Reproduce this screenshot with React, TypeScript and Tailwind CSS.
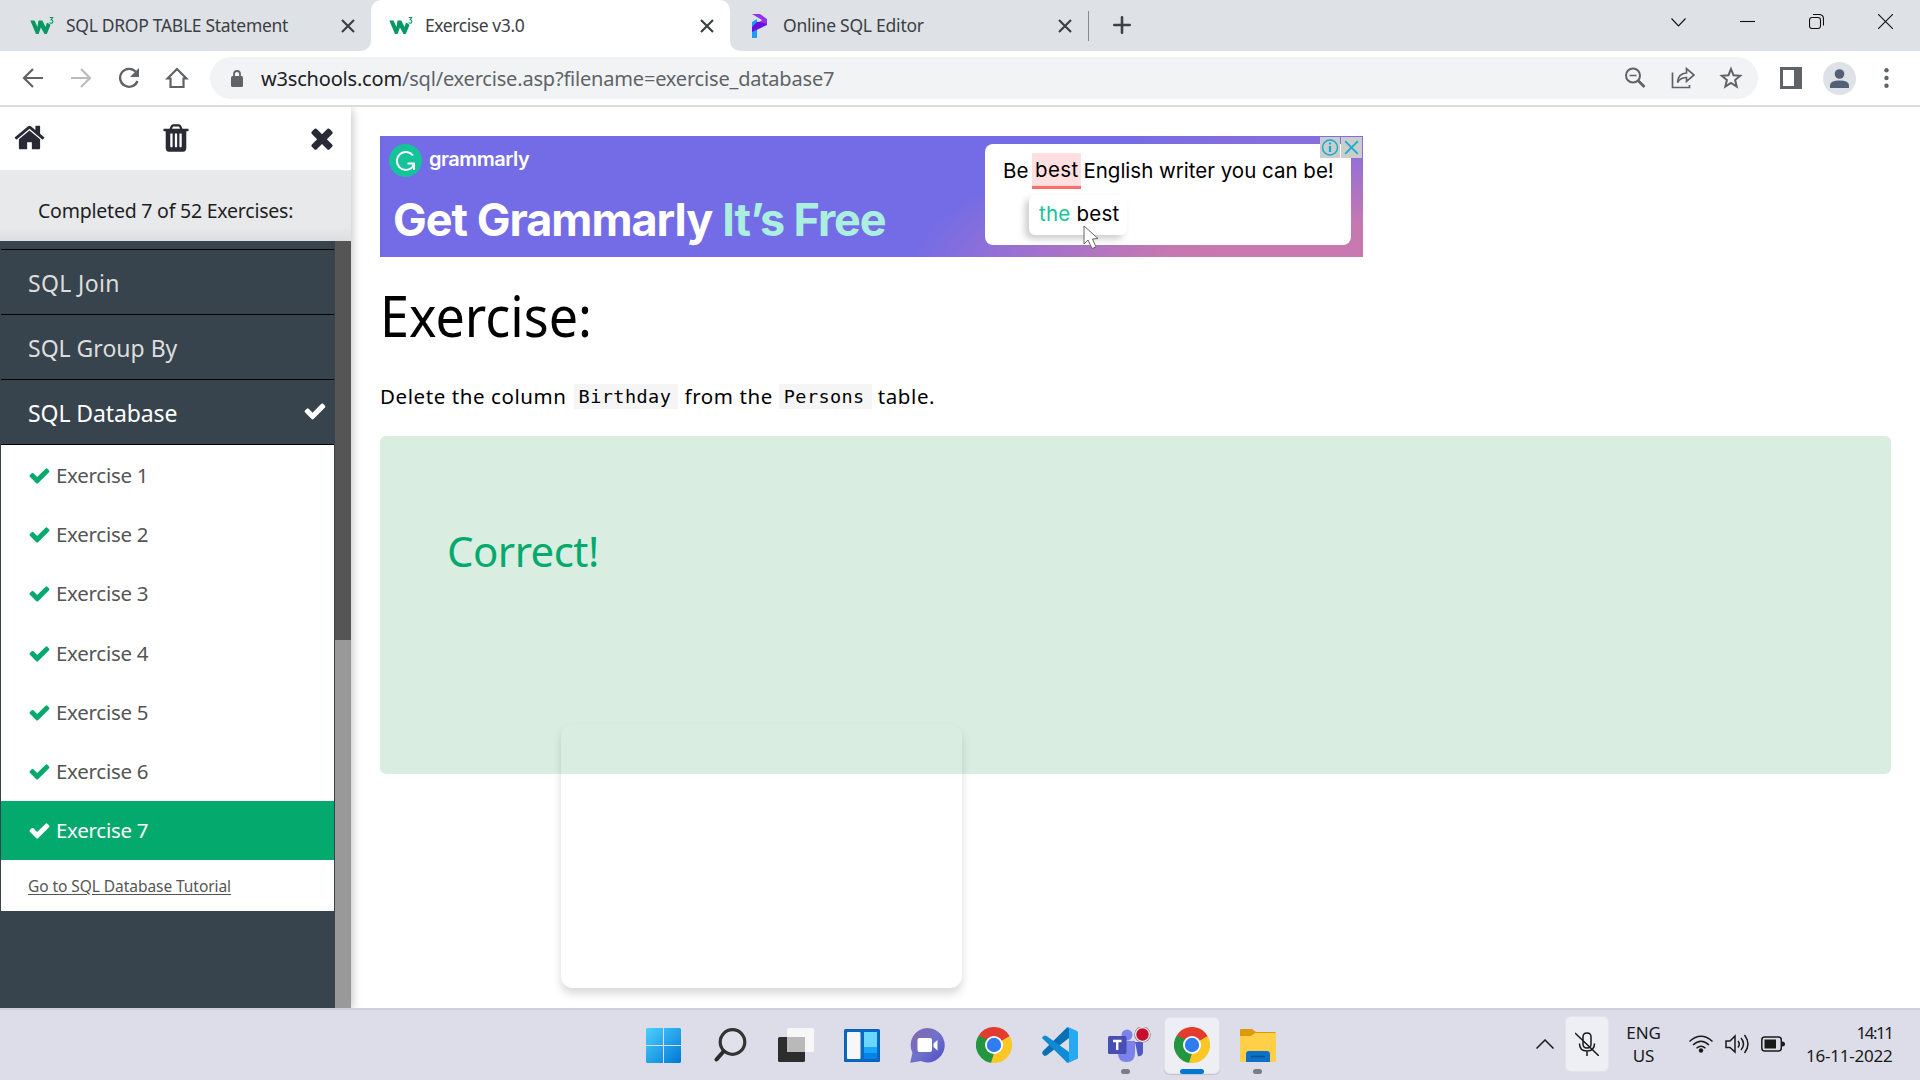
import React from "react";

const CHECK =
  "M1671 566q0 40-28 68l-724 724-136 136q-28 28-68 28t-68-28l-136-136-362-362q-28-28-28-68t28-68l136-136q28-28 68-28t68 28l294 295 656-657q28-28 68-28t68 28l136 136q28 28 28 68z";
const TIMES =
  "M1490 1322q0 40-28 68l-136 136q-28 28-68 28t-68-28l-294-294-294 294q-28 28-68 28t-68-28l-136-136q-28-28-28-68t28-68l294-294-294-294q-28-28-28-68t28-68l136-136q28-28 68-28t68 28l294 294 294-294q28-28 68-28t68 28l136 136q28 28 28 68t-28 68l-294 294 294 294q28 28 28 68z";
const HOME =
  "M1472 992v480q0 26-19 45t-45 19h-384v-384h-256v384h-384q-26 0-45-19t-19-45v-480q0-1 .5-3t.5-3l575-474 575 474q1 2 1 6zm223-69l-62 74q-8 9-21 11h-3q-13 0-21-7l-692-577-692 577q-12 8-24 7-13-2-21-11l-62-74q-8-10-7-23.5t11-21.5l719-599q32-26 76-26t76 26l244 204v-195q0-14 9-23t23-9h192q14 0 23 9t9 23v408l219 182q10 8 11 21.5t-7 23.5z";
const TRASH =
  "M704 1376v-704q0-14-9-23t-23-9h-64q-14 0-23 9t-9 23v704q0 14 9 23t23 9h64q14 0 23-9t9-23zm256 0v-704q0-14-9-23t-23-9h-64q-14 0-23 9t-9 23v704q0 14 9 23t23 9h64q14 0 23-9t9-23zm256 0v-704q0-14-9-23t-23-9h-64q-14 0-23 9t-9 23v704q0 14 9 23t23 9h64q14 0 23-9t9-23zm-544-992h448l-48-117q-7-9-17-11h-317q-10 2-17 11zm928 32v64q0 14-9 23t-23 9h-96v948q0 83-47 143.5t-113 60.5h-832q-66 0-113-58.5t-47-141.5v-952h-96q-14 0-23-9t-9-23v-64q0-14 9-23t23-9h309l70-167q15-37 54-63t79-26h320q40 0 79 26t54 63l70 167h309q14 0 23 9t9 23z";

function Glyph({ d, className }: { d: string; className: string }) {
  return (
    <svg viewBox="0 0 1792 1792" className={className} fill="currentColor">
      <path d={d} />
    </svg>
  );
}

function W3Icon() {
  return (
    <svg viewBox="0 0 24 20" className="h-5 w-6 shrink-0">
      <path d="M.3 4.500h4.200l3 6.500 1-6.500h3.800l3.300 6.500 1.300-4.300q2.300.3 3.600 2.300l-3.700 9h-2.300l-3.600-6.500-2.300 6.500H6z" fill="#059862" />
      <path d="M19.700 1.500h3l-1.600 2.300q1.800 0 1.800 1.700T21.200 7.200q-1.100 0-1.600-.7" fill="none" stroke="#059862" strokeWidth="1.100" />
    </svg>
  );
}

function TabClose() {
  return (
    <svg viewBox="0 0 14 14" className="size-[14px] shrink-0" stroke="#3c4043" strokeWidth="2.200">
      <path d="M1 1l12 12M13 1L1 13" />
    </svg>
  );
}

const WINDOW_BUTTONS = [
  "M.5 4.500L7.500 12l7-7.500",
  "M0 7.500h15",
  "M3 3.500h6q2.500 0 2.500 2.500v6q0 2.500-2.500 2.500H3Q.5 14.500.5 12V6q0-2.500 2.500-2.500M4 .5h6q4.500 0 4.500 4.500v6.500",
  "M0 0l15 15M15 0L0 15",
];

function TabStrip() {
  return (
    <div className="flex h-[51px] shrink-0 bg-[#dee1e6] text-[17.5px] text-[#3c4043]">
      <div className="relative z-10 flex w-[371px] items-center rounded-br-[10px] bg-[#dee1e6] pr-4 pl-[30px]">
        <W3Icon />
        <span className="ml-3 tracking-[-0.3px] whitespace-nowrap">SQL DROP TABLE Statement</span>
        <span className="flex-1" />
        <TabClose />
      </div>
      <div className="-mx-[10px] flex w-[379px] bg-[linear-gradient(#dee1e6_50%,#fff_50%)] px-[10px]">
        <div className="flex w-[359px] items-center rounded-t-[10px] bg-white pr-4 pl-[18px]">
          <W3Icon />
          <span className="ml-3 tracking-[-0.42px] whitespace-nowrap">Exercise v3.0</span>
          <span className="flex-1" />
          <TabClose />
        </div>
      </div>
      <div className="relative z-10 flex w-[358px] items-center rounded-bl-[10px] bg-[#dee1e6] pr-4 pl-[22px]">
        <svg viewBox="0 0 15 24" className="h-6 w-[15px] shrink-0">
          <path d="M0 8l5-3v19H0z" fill="#1b9dff" />
          <path d="M15 7v4L0 18v-5l5-5z" fill="#6a11e0" />
          <path d="M0 0h8l7 5v5L8 8l2-2z" fill="#9333ea" />
        </svg>
        <span className="ml-4 tracking-[-0.24px] whitespace-nowrap">Online SQL Editor</span>
        <span className="flex-1" />
        <TabClose />
      </div>
      <div className="mt-[11px] h-[30px] w-px bg-[#85888d]" />
      <svg viewBox="0 0 18 18" className="mt-4 ml-6 size-[18px]" stroke="#3c4043" strokeWidth="2.600" strokeLinecap="round">
        <path d="M9 1.300v15.400M1.300 9h15.400" />
      </svg>
      <span className="flex-1" />
      <div className="flex h-[43px] [&>span]:flex [&>span]:w-[69px] [&>span]:items-center [&>span]:justify-center">
        {WINDOW_BUTTONS.map((d) => (
          <span key={d}>
            <svg viewBox="0 0 15 15" className="size-[15px]" fill="none" stroke="#111" strokeWidth="1.100">
              <path d={d} />
            </svg>
          </span>
        ))}
      </div>
    </div>
  );
}

function Toolbar() {
  return (
    <div className="flex h-[56px] shrink-0 items-center border-b-2 border-[#dcdcdc] bg-white text-[#5f6368]">
      <div className="flex w-[210px] pl-[9px] [&>svg]:mx-3 [&>svg]:size-6">
        <svg viewBox="0 0 24 24" fill="none" stroke="currentColor" strokeWidth="2.200"><path d="M22 12H3M12 3l-9 9 9 9" /></svg>
        <svg viewBox="0 0 24 24" fill="none" stroke="#babcbe" strokeWidth="2.200"><path d="M2 12h19M12 3l9 9-9 9" /></svg>
        <svg viewBox="0 0 24 24" fill="none" stroke="currentColor" strokeWidth="2.300"><path d="M20.500 15a9 9 0 1 1-1.700-9.200" /><path d="M22 2v9h-9z" fill="currentColor" stroke="none" /></svg>
        <svg viewBox="0 0 24 24" fill="none" stroke="currentColor" strokeWidth="2.200"><path d="M2.500 12.500L12 3l9.500 9.500h-3V21h-13v-8.500z" /></svg>
      </div>
      <div className="flex h-[42px] w-[1548px] items-center rounded-full bg-[#f1f3f4] pr-[15px] pl-[21px]">
        <svg viewBox="0 0 12 17" className="h-[17px] w-3" fill="none" stroke="currentColor" strokeWidth="1.800">
          <path d="M3 7V4q0-3 3-3t3 3v3" /><rect y="6" width="12" height="11" rx="1.500" fill="currentColor" stroke="none" />
        </svg>
        <span className="mt-[2px] ml-[18px] text-[20px] tracking-[-0.19px] whitespace-nowrap text-[#5f6368]"><span className="text-[#202124]">w3schools.com</span>/sql/exercise.asp?filename=exercise_database7</span>
        <span className="flex-1" />
        <svg viewBox="0 0 24 24" className="size-6" fill="none" stroke="currentColor" strokeWidth="2"><circle cx="10" cy="9.500" r="7" /><path d="M6.500 9.500h7" strokeWidth="1.500" /><path d="M15 14.500l6.500 6.500" strokeWidth="2.600" /></svg>
        <svg viewBox="0 0 24 24" className="ml-6 size-6" fill="none" stroke="currentColor" strokeWidth="1.700"><path d="M1.500 6.500v15h17V19" /><path d="M6.500 16.500q.5-9 9-9.500V2.500L23 9l-7.500 6.500V11.500q-6 0-9 5z" /></svg>
        <svg viewBox="0 0 24 24" className="ml-6 size-6" fill="none" stroke="currentColor" strokeWidth="2"><path d="M12 3l2.500 6.200 6.700.5-5.100 4.300 1.600 6.500L12 17l-5.700 3.500 1.600-6.500L2.800 9.700l6.700-.5z" /></svg>
      </div>
      <svg viewBox="0 0 22 22" className="ml-[22px] size-[22px]"><path d="M0 0h22v22H0zM3 3v16h11V3z" fill="currentColor" fillRule="evenodd" /></svg>
      <svg viewBox="0 0 33 33" className="ml-[21px] size-[33px]"><circle cx="16.500" cy="16.500" r="16.500" fill="#dee1e6" /><circle cx="16.500" cy="12" r="4.800" fill="#525f75" /><path d="M7 26v-2.500q0-5 9.500-5t9.500 5V26z" fill="#525f75" /></svg>
      <svg viewBox="0 0 5 20" className="ml-[28px] h-5 w-[5px]" fill="currentColor"><circle cx="2.500" cy="2.300" r="2.200" /><circle cx="2.500" cy="10" r="2.200" /><circle cx="2.500" cy="17.700" r="2.200" /></svg>
    </div>
  );
}

function Sidebar() {
  return (
    <aside className="relative z-10 flex w-[351px] shrink-0 flex-col bg-white shadow-[0_2px_10px_rgba(0,0,0,0.3)] [clip-path:inset(0_-20px_0_0)]">
      <div className="flex h-[63px] shrink-0 items-center justify-between px-[13px] pb-[2px] text-[#282a35]">
        <Glyph d={HOME} className="size-[33px]" />
        <Glyph d={TRASH} className="size-8" />
        <Glyph d={TIMES} className="size-8" />
      </div>
      <div className="flex h-[71px] shrink-0 items-center bg-linear-to-b from-[#e7e9eb] from-80% to-[#dcdee0] pt-[10px] pl-[38px] text-[19.5px] text-[#1f1f1f]">
        <span className="tracking-[-0.22px] whitespace-nowrap">Completed 7 of 52 Exercises:</span>
      </div>
      <div className="flex min-h-0 flex-1">
        <div className="w-[335px] bg-[#38444d] px-px text-[#ddd]">
          <div className="h-[9px] border-b border-black" />
          <div className="flex h-[65px] items-center border-b border-black pt-[3px] pl-[27px] text-[23px] tracking-[0.35px]">SQL Join</div>
          <div className="flex h-[65px] items-center border-b border-black pt-[3px] pl-[27px] text-[23px]">SQL Group By</div>
          <div className="flex h-[65px] items-center justify-between border-b border-black pr-[7px] pl-[27px] text-white">
            <span className="pt-[2px] text-[23px] tracking-[-0.1px]">SQL Database</span>
            <Glyph d={CHECK} className="mb-[2px] size-6" />
          </div>
          <div className="bg-white text-[20.5px] text-[#555]">
            {[1, 2, 3, 4, 5, 6].map((n) => (
              <div key={n} className="flex h-[59.33px] items-center pt-px pl-[27px]">
                <Glyph d={CHECK} className="size-[23px] text-[#04aa6d]" />
                <span className="ml-[5px] tracking-[-0.28px]">Exercise {n}</span>
              </div>
            ))}
            <div className="flex h-[59px] items-center bg-[#04aa6d] pl-[27px] text-white">
              <Glyph d={CHECK} className="size-[23px]" />
              <span className="ml-[5px] tracking-[-0.28px]">Exercise 7</span>
            </div>
            <div className="flex h-[51px] items-center pt-[2px] pl-[27px] text-[15.5px]">
              <span className="tracking-[-0.06px] underline underline-offset-2">Go to SQL Database Tutorial</span>
            </div>
          </div>
        </div>
        <div className="w-4 bg-[#999]"><div className="h-[399px] bg-[#555]" /></div>
      </div>
    </aside>
  );
}

function Banner() {
  return (
    <div className="relative flex h-[121px] w-[983px] bg-[#746ce6] bg-[radial-gradient(ellipse_400px_165px_at_94%_125%,#cb79ab_0%,#c678b0_40%,#9a70d2_75%,#746ce6_100%)] font-['Inter']">
      <div className="w-[605px] pt-[8px] pl-[9px]">
        <div className="flex h-[33px] items-center">
          <svg viewBox="0 0 33 33" className="size-[33px]" fill="none" stroke="#fff" strokeWidth="2">
            <circle cx="16.500" cy="16.500" r="16.500" fill="#15c39a" stroke="none" />
            <path d="M24 11.500a9 9 0 1 0-1 12l2-4M18.500 19.500h6.500v6.500" />
          </svg>
          <span className="-mt-[3px] ml-[7px] text-[20px] font-semibold tracking-[-0.5px] text-white">grammarly</span>
        </div>
        <div className="mt-4 ml-[4px] text-[45px] leading-[54px] font-bold tracking-[-1px] whitespace-nowrap text-white">
          Get Grammarly<span className="ml-[10px] tracking-[-1.15px] text-[#abefe0]">It’s Free</span>
        </div>
      </div>
      <div className="mt-2 h-[101px] w-[366px] rounded-[8px] bg-white pt-[10px] pl-[18px] text-[20.5px] text-black">
        <div className="flex h-[33px] items-center whitespace-nowrap">
          <span className="pt-px">Be</span>
          <span className="ml-[4px] flex h-[36px] w-[49px] items-center justify-center border-b-3 border-[#ff6b6b] bg-[#ffdfdf] pt-[3px] tracking-[0.4px]">best</span>
          <span className="ml-[2px] pt-px">English writer you can be!</span>
        </div>
        <div className="mt-[8px] ml-[26px] flex h-10 w-[98px] items-center rounded-md bg-white pb-[2px] pl-[10px] tracking-[0.25px] whitespace-nowrap shadow-[-4px_4px_7px_rgba(0,0,0,0.2)]">
          <span><span className="text-[#15c39a]">the</span> best</span>
        </div>
      </div>
      <svg viewBox="0 0 16 25" className="absolute top-[89px] left-[703px] h-[25px] w-4" fill="#fff" stroke="#666" strokeWidth="1">
        <path d="M1 1v18l4-4 4 8.500 4-1.500-3.500-8 5.500-.5z" />
      </svg>
      <div className="absolute top-px right-px flex gap-px">
        <svg viewBox="0 0 20 20" className="h-[21px] w-5 bg-[#ccc]" fill="none" stroke="#12aed0" strokeWidth="1.500"><circle cx="10" cy="10" r="7.500" /><path d="M10 8.500v6M10 5v2" strokeWidth="2.200" /></svg>
        <svg viewBox="0 0 20 20" className="size-[21px] bg-[#ccc]" stroke="#12aed0" strokeWidth="1.700"><path d="M4 4l12 12M16 4L4 16" /></svg>
      </div>
    </div>
  );
}

function Main() {
  return (
    <main className="relative flex-1 overflow-hidden bg-white px-[29px] pt-[29px] text-black">
      <Banner />
      <h1 className="mt-[20px] flex text-[56px] leading-[76px]"><span className="origin-left scale-x-[0.93]">Exercise:</span></h1>
      <p className="mt-[27px] flex h-8 items-center text-[20.5px] tracking-[0.58px] whitespace-nowrap">
        <span>Delete the column</span>
        <code className="ml-[7px] flex h-[25px] w-[104px] items-center bg-[#f5f5f5] pt-px pl-[5px] font-['DejaVu_Sans_Mono'] text-[18.5px] tracking-[0.46px]">Birthday</code>
        <span className="ml-[7px]">from the</span>
        <code className="ml-[6px] flex h-[25px] w-[93px] items-center bg-[#f5f5f5] pt-px pl-[5px] font-['DejaVu_Sans_Mono'] text-[18.5px] tracking-[0.4px]">Persons</code>
        <span className="ml-[6px]">table.</span>
      </p>
      <div className="mt-[24px] h-[338px] rounded-md bg-[#d9eee1] pt-[85px] pl-[67px] text-[42px] leading-[60px] tracking-[-0.55px] text-[#04aa6d]">Correct!</div>
      <div className="absolute top-[617px] left-[210px] h-[264px] w-[401px] rounded-[12px] shadow-[0_6px_8px_rgba(0,0,0,0.15)]" />
    </main>
  );
}

function Chrome() {
  return (
    <svg viewBox="0 0 36 36" className="size-9">
      <path d="M18 18L2.400 9A18 18 0 0 1 33.600 9z" fill="#e33b2e" />
      <path d="M18 18L33.600 9A18 18 0 0 1 18 36z" fill="#fcc624" />
      <path d="M18 18v18A18 18 0 0 1 2.400 9z" fill="#23963f" />
      <path d="M18 9h15.600L18 18z" fill="#e33b2e" />
      <path d="M25.800 22.500L18 36q-3 0-3-.3L20 20z" fill="#fcc624" />
      <path d="M10.200 22.500L2.400 9l9 3z" fill="#23963f" />
      <circle cx="18" cy="18" r="9" fill="#fff" />
      <circle cx="18" cy="18" r="7.200" fill="#2f7cf0" />
    </svg>
  );
}

function Slot({ children, dot, active }: { children: React.ReactNode; dot?: boolean; active?: boolean }) {
  return (
    <div className="relative flex h-[72px] w-[66px] items-center justify-center">
      {active && <div className="absolute top-[8px] left-[5px] h-[57px] w-14 rounded-md border border-[#e3e4ea] bg-[#eeeff4] shadow-[0_1px_1px_rgba(0,0,0,0.12)]" />}
      <div className="relative flex items-center justify-center">{children}</div>
      {active && <div className="absolute top-[60px] h-[5px] w-6 rounded-full bg-[#0078d4]" />}
      {dot && <div className="absolute top-[60px] h-[5px] w-[9px] rounded-full bg-[#7c7d83]" />}
    </div>
  );
}

function Taskbar() {
  return (
    <div className="flex h-[72px] shrink-0 border-t-2 border-[#cdd0db] bg-[#dcdde8] pl-[630.5px] text-[17px] text-[#1a1a1a] [&>div]:-mt-px">
      <Slot>
        <svg viewBox="0 0 35 35" className="size-[35px]">
          <defs><linearGradient id="win" x1="0" y1="0" x2="1" y2="1"><stop stopColor="#4cd0ff" /><stop offset="1" stopColor="#0078d4" /></linearGradient></defs>
          <path d="M1 0h16v17H0V1zM18 0h16l1 1v16H18zM0 18h17v17H1l-1-1zM18 18h17v16l-1 1H18z" fill="url(#win)" />
        </svg>
      </Slot>
      <Slot>
        <svg viewBox="0 0 34 34" className="size-[34px]" fill="none" stroke="#2b2b2b"><circle cx="19.500" cy="14" r="12.300" stroke="#333" strokeWidth="3.200" fill="#ffffff22" /><path d="M10.500 23.500l-7 8" strokeWidth="4" strokeLinecap="round" /></svg>
      </Slot>
      <Slot>
        <svg viewBox="0 0 36 34" className="h-[34px] w-9"><rect y="9" width="27" height="25" rx="1.500" fill="#2d2d2d" /><rect x="9" y="0" width="27" height="24" rx="1.500" fill="#f7f7f7" /><path d="M9 9h18v15H10.500L9 22.500z" fill="#b9b9b9" /></svg>
      </Slot>
      <Slot>
        <svg viewBox="0 0 36 33" className="h-[33px] w-9"><rect width="36" height="33" rx="1.500" fill="#0a5fb4" /><rect x="1" y="1" width="34" height="31" fill="#0869c3" /><rect x="3" y="3" width="13.500" height="27" rx="1" fill="#f7f7f7" /><rect x="20" y="3" width="13" height="15" fill="#69d7ff" /><rect x="20" y="18" width="13" height="6" fill="#1aa5f8" /><rect x="20" y="24" width="13" height="6" fill="#0683e8" /></svg>
      </Slot>
      <Slot>
        <svg viewBox="0 0 35 35" className="size-[35px]">
          <defs><linearGradient id="chat" x1="0" y1="0" x2="1" y2="1"><stop stopColor="#8a64a8" /><stop offset=".5" stopColor="#6f72cc" /><stop offset="1" stopColor="#4f4cc8" /></linearGradient></defs>
          <path d="M17.500 0a17.200 17.200 0 1 1-6.800 33L1 34.700q-1-.3-.5-1.500L2.500 25A17.200 17.200 0 0 1 17.500 0z" fill="url(#chat)" /><rect x="7.500" y="10" width="14.500" height="14" rx="2" fill="#fff" /><path d="M23.500 15.500l4-3.500v10.500l-4-3.500z" fill="#fff" />
        </svg>
      </Slot>
      <Slot><Chrome /></Slot>
      <Slot>
        <svg viewBox="0 0 36 36" className="size-9"><path d="M1 24l24-23.500 2 .5v10L4.500 28.500l-2 .5L.5 27q-.7-1.500.5-3z" fill="#0a6fb5" /><path d="M1 12l24 23.500 2-.5V25L4.500 9 2.500 8.500.5 10q-.7 1 .5 2z" fill="#0f8ad4" /><path d="M26 0l9 4q1 .5 1 1.500v25q0 1-1 1.500l-9 4q-1 0-2-1 3 1 3-2V3q0-3-3-2 1-1 2-1z" fill="#24a9f2" /></svg>
      </Slot>
      <Slot dot>
        <svg viewBox="0 0 44 36" className="ml-2 h-9 w-11">
          <circle cx="19" cy="8" r="5.500" fill="#7b83eb" /><path d="M27 15h8v10q0 4-5 4.500z" fill="#4f58c4" /><path d="M10 14h17v12q0 9-8.500 9T10 26z" fill="#7b83eb" /><rect y="9" width="18.500" height="18" rx="1.500" fill="#474fb5" /><path d="M5 14h8.500M9.200 14v9" stroke="#fff" strokeWidth="2.400" /><circle cx="34.500" cy="7.500" r="8.200" fill="#7f8088" /><circle cx="34.500" cy="7.500" r="7.500" fill="#f3e9ee" /><circle cx="34.500" cy="7.500" r="6.200" fill="#c50f2c" />
        </svg>
      </Slot>
      <Slot active><Chrome /></Slot>
      <Slot dot>
        <svg viewBox="0 0 36 33" className="h-[33px] w-9"><path d="M0 1q0-1 1-1h11l4 3h19l1 1v10H0z" fill="#dd9b08" /><path d="M0 7h11l4-3h21v29H0z" fill="#ffcf48" /><path d="M6 33v-8q0-3 3-3h18q3 0 3 3v8z" fill="#0d70c8" /><path d="M11 27.500h14" stroke="#0a4f93" strokeWidth="1.600" /></svg>
      </Slot>
      <div className="flex flex-1 items-center pb-[2px]">
        <svg viewBox="0 0 18 10" className="ml-[245px] h-[10px] w-[18px]" fill="none" stroke="currentColor" strokeWidth="1.500"><path d="M.5 9.500L9 1l8.500 8.500" /></svg>
        <div className="ml-[11px] flex h-14 w-11 items-center justify-center rounded-md border border-[#e3e4ea] bg-[#eeeff4]">
          <svg viewBox="0 0 24 24" className="size-6" fill="none" stroke="currentColor" strokeWidth="1.500"><path d="M8 8V5q0-4 4-4t4 4v7q0 4-4 4t-4-4zM4.500 11.500q0 7.500 7.500 7.500t7.500-7.500M12 19v5M0 1l24 23" /></svg>
        </div>
        <div className="ml-[18px] flex w-[34px] flex-col items-center leading-[23px] tracking-[-0.1px]"><span>ENG</span><span>US</span></div>
        <svg viewBox="0 0 24 18" className="ml-7 h-[18px] w-6" fill="none" stroke="currentColor" strokeWidth="1.500"><path d="M.5 6.500q11.500-10.500 23 0M4 10q8-7.500 16 0M7.500 13.200q4.500-4 9 0" /><circle cx="12" cy="15.500" r="2.200" fill="currentColor" stroke="none" /></svg>
        <svg viewBox="0 0 24 20" className="ml-3 h-5 w-6" fill="none" stroke="currentColor" strokeWidth="1.500"><path d="M1 7v6.500h4l5 4.500V2L5 7zM13 7q2.500 3 0 6.500M16 4q5 6 0 12M19.500 1q7 9 0 18" /></svg>
        <svg viewBox="0 0 24 16" className="ml-3 h-4 w-6" fill="none" stroke="currentColor" strokeWidth="1.500"><rect x=".8" y="1" width="19.500" height="14" rx="3" /><rect x="3.500" y="3.500" width="11.500" height="9" fill="currentColor" stroke="none" /><path d="M21 5.500q3 0 3 2.500t-3 2.500z" fill="currentColor" stroke="none" /></svg>
        <div className="ml-[23px] flex w-[85px] flex-col items-end leading-[23px] whitespace-nowrap"><span className="tracking-[-1.5px]">14:11</span><span className="tracking-[-0.22px]">16-11-2022</span></div>
      </div>
    </div>
  );
}

export default function App() {
  return (
    <div className="flex h-[1080px] w-[1920px] flex-col overflow-hidden bg-white font-['Noto_Sans',sans-serif]">
      <TabStrip />
      <Toolbar />
      <div className="flex h-[901px] shrink-0">
        <Sidebar />
        <Main />
      </div>
      <Taskbar />
    </div>
  );
}
